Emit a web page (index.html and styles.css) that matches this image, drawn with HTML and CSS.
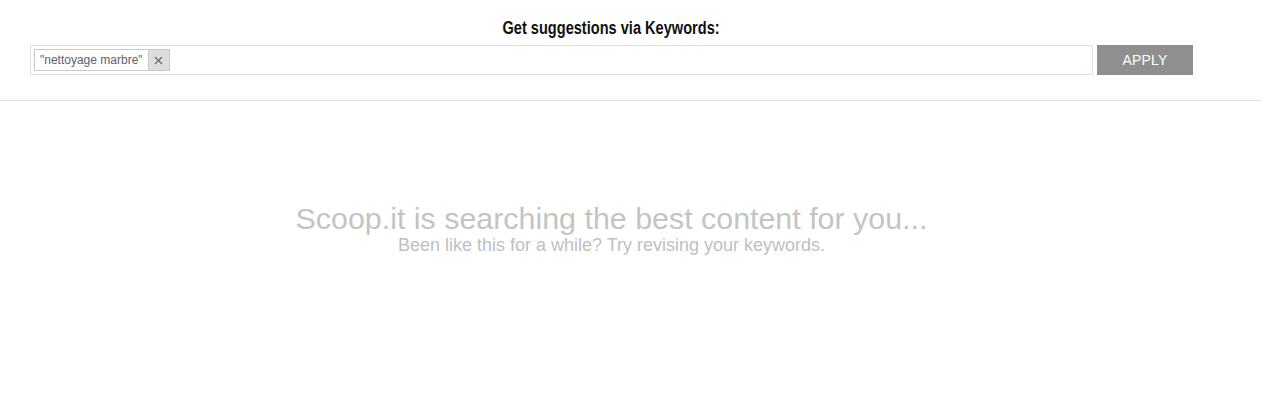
FILE: index.html
```html
<!DOCTYPE html>
<html lang="en">
<head>
    <meta charset="UTF-8">
    <title>Suggestions</title>
    <link rel="stylesheet" href="styles.css">
</head>
<body>
    <div class="header">
        <div class="header-inner">
            <h2 class="title"><span class="title-text">Get suggestions via Keywords:</span></h2>
            <div class="search-row">
                <div class="tags-input">
                    <span class="tag">
                        <span class="tag-label">"nettoyage marbre"</span>
                        <span class="tag-remove">
                            <svg width="9" height="9" viewBox="0 0 9 9">
                                <path d="M1 1 L8 8 M8 1 L1 8" stroke="#666" stroke-width="1.1" fill="none"/>
                            </svg>
                        </span>
                    </span>
                </div>
                <button class="apply">APPLY</button>
            </div>
        </div>
    </div>

    <div class="waiting">
        <div class="waiting-title">Scoop.it is searching the best content for you...</div>
        <div class="waiting-sub">Been like this for a while? Try revising your keywords.</div>
    </div>
</body>
</html>
```

FILE: styles.css
```css
body {
    margin: 0;
    background: #fff;
    font-family: "Liberation Sans", Arial, sans-serif;
}

.header {
    border-bottom: 1px solid #dde1e9;
    padding: 19px 0 25px;
}

.header-inner {
    width: 1223px;
    padding: 0 30px;
    box-sizing: border-box;
}

.title {
    margin: 0 0 7px;
    text-align: center;
    font-size: 18px;
    font-weight: bold;
    line-height: 19px;
    color: #111;
}

.title-text {
    display: inline-block;
    transform: scaleX(0.81);
}

.search-row {
    display: flex;
    gap: 4px;
}

.tags-input {
    flex: 1;
    height: 30px;
    box-sizing: border-box;
    border: 1px solid #dde1e9;
    padding: 3px 3px;
    display: flex;
    align-items: flex-start;
}

.tag {
    display: flex;
    height: 22px;
    box-sizing: border-box;
    border: 1px solid #c9c9c9;
    font-size: 12px;
    color: #5a6272;
}

.tag-label {
    padding: 0 5px;
    line-height: 20px;
}

.tag-remove {
    width: 20px;
    background: #ddd;
    border-left: 1px solid #c9c9c9;
    display: flex;
    align-items: center;
    justify-content: center;
}

.apply {
    width: 96px;
    height: 30px;
    border: none;
    background: #8f8f8f;
    color: #fff;
    font-family: "Liberation Sans", Arial, sans-serif;
    font-size: 14px;
    letter-spacing: 0.2px;
    padding: 0;
}

.waiting {
    width: 1223px;
    text-align: center;
    padding-top: 100px;
}

.waiting-title {
    font-size: 30.4px;
    line-height: 34px;
    color: #c4c4c4;
}

.waiting-sub {
    font-size: 18px;
    line-height: 20px;
    color: #c0c0c0;
}
```
